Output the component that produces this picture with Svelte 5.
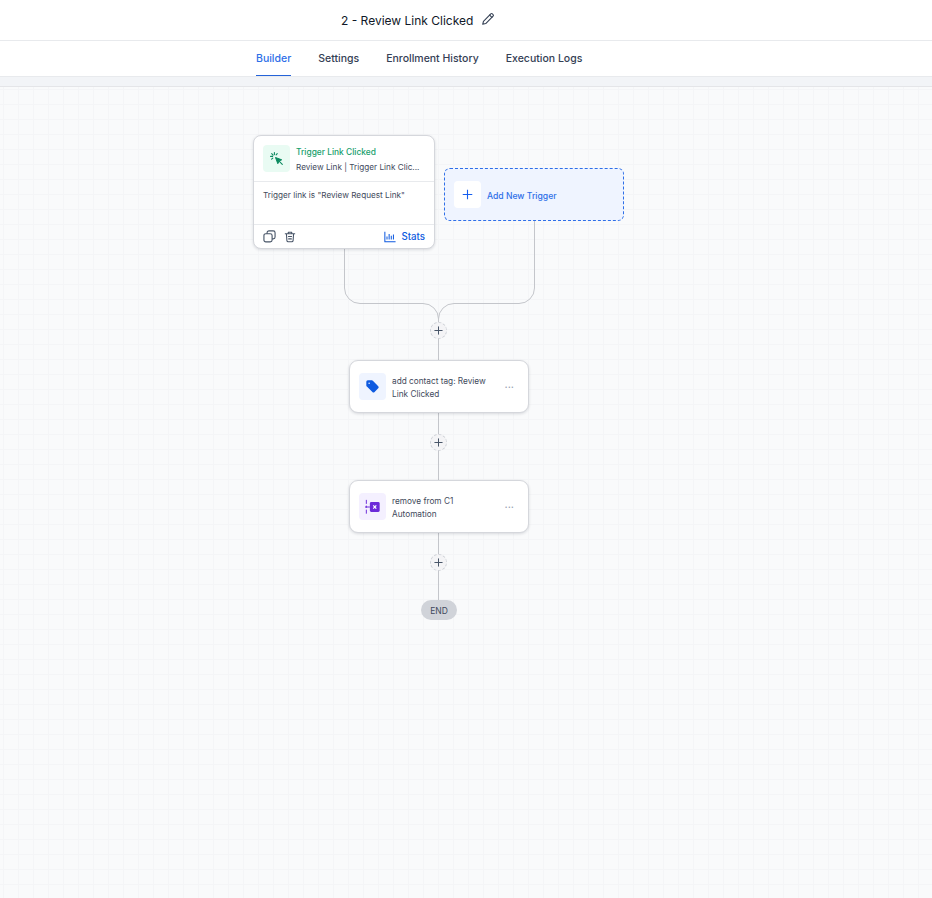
<script lang="ts">
  // Tabs under the workflow title
  const tabs = ["Builder", "Settings", "Enrollment History", "Execution Logs"];
  let activeTab = $state("Builder");

  // Action steps on the canvas
  const steps = [
    { id: "tag", top: 360, line1: "add contact tag: Review", line2: "Link Clicked", tint: "#eff4ff" },
    { id: "remove", top: 480, line1: "remove from C1", line2: "Automation", tint: "#f4f0ff" },
  ];

  // Little plus buttons on the connector
  const addButtons = [330, 442, 562];
</script>

<div class="page">
  <header class="title-bar">
    <span class="title">2 - Review Link Clicked</span>
    <svg class="pencil" viewBox="0 0 16 16" width="14" height="14" fill="none" stroke="#344054" stroke-width="1.25" stroke-linejoin="round" stroke-linecap="round">
      <path d="M2 14l.8-3.4L11.2 2.2a1.3 1.3 0 0 1 1.8 0l.8.8a1.3 1.3 0 0 1 0 1.8L5.4 13.2 2 14z" />
      <path d="M9.9 3.5l2.6 2.6" />
    </svg>
  </header>

  <nav class="tabs">
    {#each tabs as tab}
      <button class="tab" class:active={tab === activeTab} onclick={() => (activeTab = tab)}>{tab}</button>
    {/each}
  </nav>

  <div class="strip"></div>

  <main class="canvas">
    <!-- connectors, page coordinates minus the canvas offset -->
    <svg class="wires" width="932" height="811" viewBox="0 87 932 811" fill="none" stroke="#c4c6cb" stroke-width="1">
      <path d="M344.5 248V288a15.5 15.5 0 0 0 15.5 15.5H423a15.5 15.5 0 0 1 15.5 15.5V361" />
      <path d="M534.5 221V288a15.5 15.5 0 0 1 -15.5 15.5H454a15.5 15.5 0 0 0 -15.5 15.5" />
      <path d="M438.5 412V481" />
      <path d="M438.5 532V601" />
    </svg>

    <!-- trigger card -->
    <section class="node trigger">
      <div class="trigger-head">
        <div class="icon-box green">
          <svg viewBox="0 0 16 16" width="16" height="16" fill="none">
            <path d="M6.5 6.5l6.2 2.3-2.6 1.3-1.3 2.6z" fill="#0b8a5f" stroke="#0b8a5f" stroke-linejoin="round" />
            <path d="M10.3 10.3l3 3M5.4 1.6v2M1.6 5.4h2M2.7 2.7l1.4 1.4M8.2 2.6L7.1 3.8M2.6 8.2l1.2-1.1" stroke="#0b8a5f" stroke-width="1.1" stroke-linecap="round" />
          </svg>
        </div>
        <div class="trigger-text">
          <div class="trigger-name">Trigger Link Clicked</div>
          <div class="trigger-sub">Review Link | Trigger Link Clic...</div>
        </div>
      </div>
      <div class="trigger-body">Trigger link is "Review Request Link"</div>
      <div class="trigger-foot">
        <svg viewBox="0 0 14 14" width="13" height="13" fill="none" stroke="#475467" stroke-width="1.2" stroke-linejoin="round">
          <rect x="1" y="4" width="8.8" height="8.8" rx="2" />
          <path d="M4.4 4V3a2 2 0 0 1 2-2H11a2 2 0 0 1 2 2v4.6a2 2 0 0 1-2 2H9.8" />
        </svg>
        <svg viewBox="0 0 14 14" width="12" height="12" fill="none" stroke="#475467" stroke-width="1.25" stroke-linecap="round" stroke-linejoin="round">
          <path d="M1.5 3.2h11M5 3V1.5h4V3M2.8 3.2l.6 8a1.5 1.5 0 0 0 1.5 1.3h4.2a1.5 1.5 0 0 0 1.5-1.3l.6-8M5.2 6.5h3.6M5.4 9.2h3.2" />
        </svg>
        <span class="stats">
          <svg viewBox="0 0 14 14" width="12" height="12" fill="none" stroke="#0e5ae0" stroke-width="1.2">
            <path d="M1 1v11.5h12.5M3.5 10V6.5M6 10V3.5M8.5 10V5.5M11 10V4" />
          </svg>
          Stats
        </span>
      </div>
    </section>

    <!-- add trigger -->
    <button class="node add-trigger">
      <span class="add-box">
        <svg viewBox="0 0 12 12" width="11" height="11" stroke="#155eef" stroke-width="1.2" fill="none">
          <path d="M6 .8v10.4M.8 6h10.4" />
        </svg>
      </span>
      <span class="add-label">Add New Trigger</span>
    </button>

    <!-- action steps -->
    {#each steps as step}
      <section class="node step" style="top: {step.top - 87}px">
        <div class="icon-box" style="background: {step.tint}">
          {#if step.id === "tag"}
            <svg viewBox="0 0 16 16" width="15" height="15">
              <path d="M1.4 3a1.6 1.6 0 0 1 1.6-1.6h4.3c.4 0 .8.2 1.1.5l5.7 5.7a1.6 1.6 0 0 1 0 2.3l-3.9 3.9a1.6 1.6 0 0 1-2.3 0L2 8.1a1.6 1.6 0 0 1-.6-1.2z" fill="#0e5ae0" />
              <circle cx="4.4" cy="4.4" r=".8" fill="#eff4ff" />
            </svg>
          {:else}
            <svg viewBox="0 0 18 18" width="16" height="16" fill="none">
              <rect x="5.5" y="3.5" width="11" height="11" rx="1.5" fill="#6c2bd9" />
              <path d="M9.3 7.2l3.4 3.6M12.7 7.2L9.3 10.8" stroke="#fff" stroke-width="1.4" />
              <path d="M1.5 1v4.5M1.5 7.5v2.5M1.5 12v4.5M0 9h5.5" stroke="#6c2bd9" stroke-width="1.1" />
            </svg>
          {/if}
        </div>
        <div class="step-text">{step.line1}<br />{step.line2}</div>
        <span class="dots">···</span>
      </section>
    {/each}

    {#each addButtons as y}
      <span class="plus" style="top: {y - 87 - 8.5}px">
        <svg viewBox="0 0 10 10" width="9" height="9" stroke="#475467" stroke-width="1.1" fill="none">
          <path d="M5 .5v9M.5 5h9" />
        </svg>
      </span>
    {/each}

    <div class="end">END</div>
  </main>
</div>

<style>
  :global(body) {
    margin: 0;
    font-family: Inter, "Noto Sans", sans-serif;
    background: #f9fafb;
  }

  .page {
    display: flex;
    flex-direction: column;
    height: 898px;
    overflow: hidden;
  }

  .title-bar {
    height: 40px;
    box-sizing: content-box;
    border-bottom: 1px solid #e8eaed;
    background: #fff;
    display: flex;
    align-items: center;
    gap: 8px;
    padding-left: 341px;
  }

  .title {
    font-size: 12px;
    color: #101828;
  }

  .pencil {
    margin-bottom: 2px;
  }

  .tabs {
    height: 35px;
    background: #fff;
    display: flex;
    gap: 27px;
    padding-left: 256px;
  }

  .tab {
    all: unset;
    height: 35px;
    box-sizing: border-box;
    border-bottom: 1px solid transparent;
    font-size: 10.5px;
    line-height: 13px;
    font-weight: 500;
    color: #344054;
    cursor: pointer;
  }

  .tab.active {
    color: #2e6fe8;
    border-bottom-color: #2563d8;
  }

  .strip {
    height: 9px;
    background: #f2f4f7;
    border-top: 1px solid #e8eaed;
    border-bottom: 1px solid #e4e5e8;
  }

  .canvas {
    position: relative;
    flex: 1;
    background-color: #f9fafb;
    background-image:
      linear-gradient(to right, #f4f5f7 1px, transparent 1px),
      linear-gradient(to bottom, #f4f5f7 1px, transparent 1px);
    background-size: 15px 15px;
    background-position: 3px 2px;
  }

  .wires {
    position: absolute;
    left: 0;
    top: 0;
  }

  .node {
    position: absolute;
    box-sizing: border-box;
    background: #fff;
    border: 1px solid #d5d7dc;
    border-radius: 8px;
    box-shadow: 0 1px 3px rgba(16, 24, 40, 0.14);
  }

  .trigger {
    left: 253px;
    top: 48px;
    width: 182px;
    height: 114px;
    display: flex;
    flex-direction: column;
  }

  .trigger-head {
    height: 45px;
    display: flex;
    align-items: center;
    gap: 6px;
    padding: 0 9px;
    border-bottom: 1px solid #e8eaed;
  }

  .icon-box {
    width: 27px;
    height: 27px;
    flex: none;
    border-radius: 4px;
    display: flex;
    align-items: center;
    justify-content: center;
  }

  .icon-box.green {
    background: #e9fbf3;
  }

  .trigger-name {
    font-size: 8.4px;
    line-height: 12px;
    font-weight: 500;
    color: #16a06c;
    margin: 1px 0 3px;
  }

  .trigger-sub {
    font-size: 8.2px;
    line-height: 12px;
    color: #3f4a5c;
    white-space: nowrap;
  }

  .trigger-body {
    height: 43px;
    padding: 7px 9px 0;
    box-sizing: border-box;
    font-size: 8.2px;
    line-height: 12px;
    color: #3f4a5c;
    border-bottom: 1px solid #e8eaed;
  }

  .trigger-foot {
    flex: 1;
    display: flex;
    align-items: center;
    gap: 8px;
    padding: 0 9px;
  }

  .stats {
    margin-left: auto;
    display: flex;
    align-items: center;
    gap: 5px;
    font-size: 9.7px;
    font-weight: 500;
    color: #0e5ae0;
  }

  .add-trigger {
    all: unset;
    position: absolute;
    left: 444px;
    top: 81px;
    width: 180px;
    height: 53px;
    box-sizing: border-box;
    background: #eff4ff;
    border: 1px dashed #2e6fe8;
    border-radius: 6px;
    display: flex;
    align-items: center;
    gap: 6px;
    padding-left: 9px;
    cursor: pointer;
  }

  .add-box {
    width: 27px;
    height: 27px;
    border-radius: 4px;
    background: #fff;
    display: flex;
    align-items: center;
    justify-content: center;
  }

  .add-label {
    font-size: 8.6px;
    font-weight: 500;
    color: #2e6fe8;
    margin-top: 2px;
  }

  .step {
    left: 349px;
    width: 180px;
    height: 53px;
    display: flex;
    align-items: center;
    gap: 6px;
    padding: 0 9px;
    border-radius: 9px;
  }

  .step-text {
    flex: 1;
    padding-top: 2px;
    font-size: 8.25px;
    line-height: 12.5px;
    color: #3f4a5c;
  }

  .dots {
    font-size: 11px;
    color: #98a2b3;
    margin-right: 5px;
  }

  .plus {
    position: absolute;
    left: 430px;
    width: 17px;
    height: 17px;
    box-sizing: border-box;
    border-radius: 50%;
    background: #f4f4f6;
    border: 1px dashed #cfd2d8;
    display: flex;
    align-items: center;
    justify-content: center;
  }

  .end {
    position: absolute;
    left: 421px;
    top: 513px;
    width: 36px;
    height: 20px;
    border-radius: 10px;
    background: #d0d3d9;
    color: #3f4a5c;
    font-size: 8.5px;
    line-height: 22px;
    text-align: center;
  }
</style>
